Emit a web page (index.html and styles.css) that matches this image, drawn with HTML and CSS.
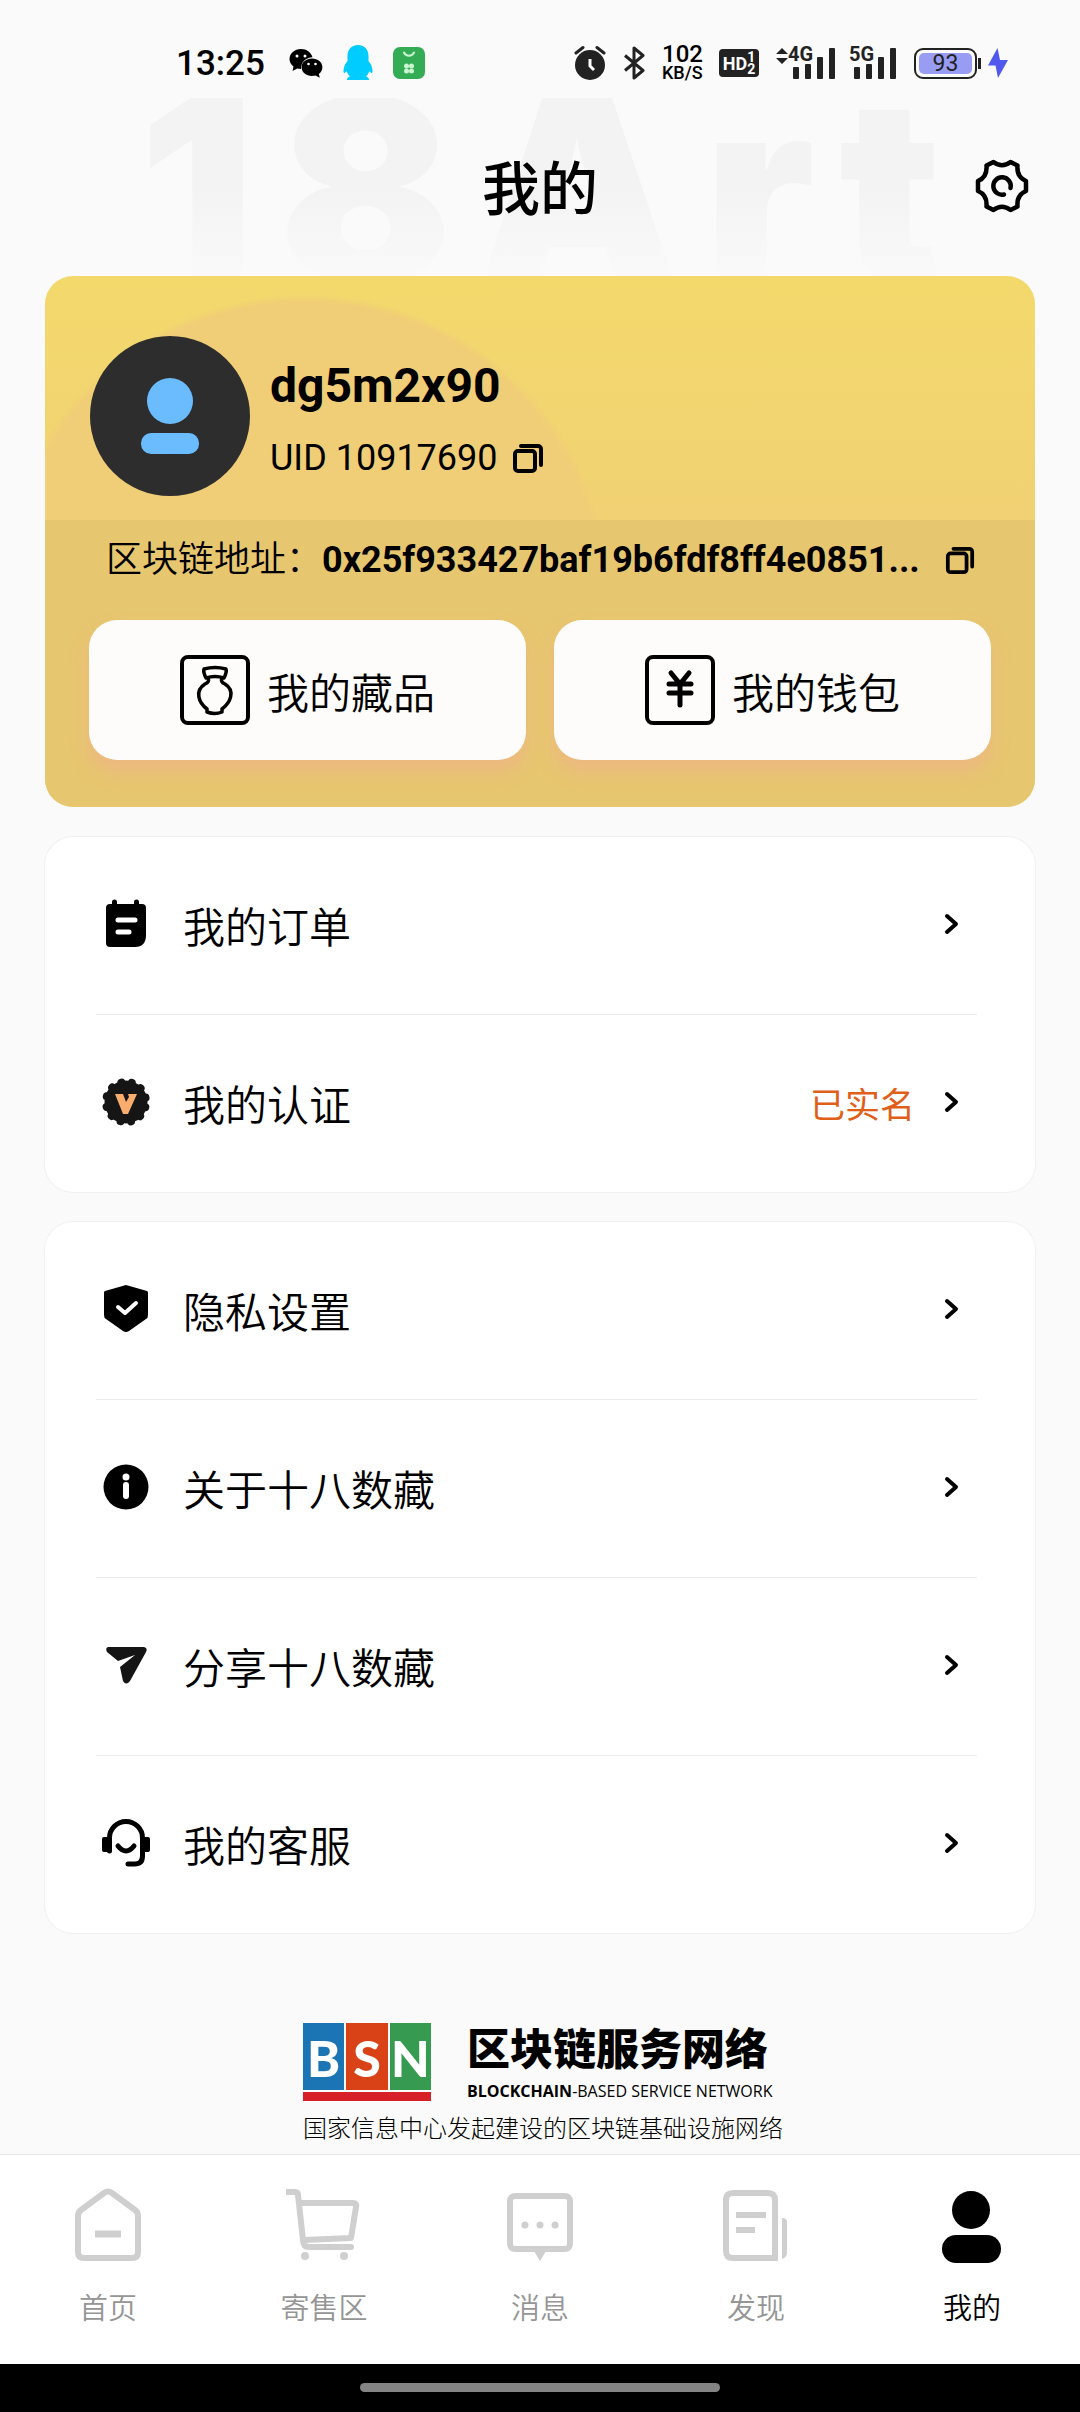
FILE: index.html
```html
<!DOCTYPE html>
<html lang="zh-CN">
<head>
<meta charset="utf-8">
<meta name="viewport" content="width=device-width, initial-scale=1">
<title>我的</title>
<link rel="stylesheet" href="styles.css">
</head>
<body>
<svg class="defs" aria-hidden="true">
  <symbol id="copy" viewBox="0 0 32 32"><path d="M9 4h17a3 3 0 0 1 3 3v16M3 12a3 3 0 0 1 3-3h14a3 3 0 0 1 3 3v14a3 3 0 0 1-3 3H6a3 3 0 0 1-3-3z" fill="none" stroke="currentColor" stroke-width="4" stroke-linecap="round"/></symbol>
  <symbol id="chevron" viewBox="0 0 16 24"><path d="M3 4l9 8-9 8" fill="none" stroke="currentColor" stroke-width="4" stroke-linecap="round" stroke-linejoin="round"/></symbol>
</svg>
<div class="page">
  <div class="watermark" aria-hidden="true"><span>1</span><span>8</span><span>A</span><span>r</span><span>t</span></div>

  <div class="status">
    <div class="status-left">
      <span class="clock">13:25</span>
      <svg width="34" height="30" viewBox="0 0 34 30"><path d="M12 1C5.500 1 .5 5.500.5 11c0 3 1.600 5.700 4 7.500L3.500 23l4.800-2.600c1.200.3 2.400.5 3.700.5C12 14 17 9.500 23.500 9.300 22.200 4.500 17.500 1 12 1z"/><path d="M23 10.500c-5.800 0-10.400 3.800-10.400 8.700S17.200 28 23 28c1.200 0 2.400-.2 3.500-.5l4.300 2.300-1-3.800c2.200-1.600 3.600-4 3.600-6.800 0-4.900-4.600-8.700-10.400-8.700z"/><g fill="#fff"><circle cx="8" cy="8" r="1.500"/><circle cx="16" cy="8" r="1.500"/><circle cx="19.500" cy="16" r="1.300"/><circle cx="26.500" cy="16" r="1.300"/></g></svg>
      <svg width="30" height="36" viewBox="0 0 30 36"><path fill="#0cf" d="M15 0C8 0 4.500 5 4.500 11v5C2 19 .5 22.500.5 26c0 2 .8 3 2.500.5l1 .2c.6 2 1.700 3.600 3 4.700-2 .6-3 1.500-3 3.600h22c0-2.100-1-3-3-3.600 1.300-1.100 2.400-2.700 3-4.700l1-.2c1.700 2.500 2.500 1.500 2.500-.5 0-3.500-1.500-7-4-10v-5C25.500 5 22 0 15 0z"/></svg>
      <svg width="32" height="32" viewBox="0 0 32 32"><rect width="32" height="32" rx="7" fill="#34ab55"/><path d="M11 5.500a5.500 5.500 0 0 0 10 0" fill="none" stroke="#c9f5d0" stroke-width="2" stroke-linecap="round"/><g fill="#c9f5d0"><circle cx="13.500" cy="19" r="2.500"/><circle cx="18.500" cy="19" r="2.500"/><circle cx="13.500" cy="24" r="2.500"/><circle cx="18.500" cy="24" r="2.500"/></g></svg>
    </div>
    <div class="status-right">
      <svg width="32" height="36" viewBox="0 0 32 36"><circle cx="16" cy="20" r="15" fill="#222"/><path d="M2 8l7-5.500M30 8l-7-5.500" stroke="#222" stroke-width="3" stroke-linecap="round"/><path d="M16 14v7l4 4" fill="none" stroke="#fff" stroke-width="3"/></svg>
      <svg width="22" height="34" viewBox="0 0 22 34"><path d="M2 9.500l18 15-9 7.500V2l9 7.500-18 15" fill="none" stroke="#222" stroke-width="3" stroke-linejoin="round"/></svg>
      <div class="speed"><span class="speed-num">102</span><span class="speed-unit">KB/S</span></div>
      <div class="hd"><span>HD</span><span class="hd-nums"><span>1</span><span>2</span></span></div>
      <div class="signal"><svg width="12" height="16" viewBox="0 0 12 16"><path d="M6 0l6 6H0zM6 16l6-6H0z" fill="#222"/></svg><div class="net"><span>4G</span><svg width="44" height="31" viewBox="0 0 44 31" fill="#222"><rect x="1" y="19" width="6" height="12" rx="1"/><rect x="13" y="16" width="6" height="15" rx="1"/><rect x="25" y="9" width="6" height="22" rx="1"/><rect x="37" width="6" height="31" rx="1"/></svg></div></div>
      <div class="net"><span>5G</span><svg width="44" height="31" viewBox="0 0 44 31" fill="#222"><rect x="1" y="19" width="6" height="12" rx="1"/><rect x="13" y="16" width="6" height="15" rx="1"/><rect x="25" y="9" width="6" height="22" rx="1"/><rect x="37" width="6" height="31" rx="1"/></svg></div>
      <div class="battery"><span>93</span></div>
      <svg class="bolt" width="20" height="30" viewBox="0 0 20 30"><path d="M9.500 0L0 17.500h7.500L10 30l10-18h-8z" fill="#5258ee"/></svg>
    </div>
  </div>

  <header class="header">
    <h1>我的</h1>
    <button class="gear" aria-label="设置"><svg width="54" height="54" viewBox="-27 -27 54 54"><path d="M-15.500-20.500L-8.500-24Q0-17.500 8.500-24L15.500-20.500Q14.500-9 24-5V5Q14.500 9 15.500 20.500L8.500 24Q0 17.500-8.500 24L-15.500 20.500Q-14.500 9-24 5V-5Q-14.500-9-15.500-20.500z" fill="none" stroke="#000" stroke-width="4.500" stroke-linejoin="round"/><path d="M8.500 2A8.700 8.700 0 1 0 2 8.500" fill="none" stroke="#000" stroke-width="4.500" stroke-linecap="round"/></svg></button>
  </header>

  <main>
    <section class="account">
      <div class="profile">
        <div class="avatar"><svg width="60" height="78" viewBox="0 0 60 78" fill="#6bbcff"><circle cx="30" cy="24" r="23"/><rect x="1" y="56" width="58" height="21" rx="10"/></svg></div>
        <div class="who">
          <h2>dg5m2x90</h2>
          <div class="uid"><span>UID 10917690</span><button aria-label="复制UID"><svg width="32" height="32"><use href="#copy"/></svg></button></div>
        </div>
      </div>
      <div class="chain">
        <div class="address">
          <div class="address-text">
            <span class="address-label">区块链地址：</span>
            <span class="address-value">0x25f933427baf19b6fdf8ff4e0851...</span>
          </div>
          <button aria-label="复制地址"><svg width="30" height="30"><use href="#copy"/></svg></button>
        </div>
        <div class="shortcuts">
          <button><svg width="70" height="70" viewBox="0 0 70 70" fill="none" stroke="#000"><rect x="2" y="2" width="66" height="66" rx="6" stroke-width="4"/><path d="M24 14Q35 11 46 14Q47 17 44 23Q35 20 26 23Q23 17 24 14zM28 23Q30 27 25 29C14 36 19 48 27 54V57Q35 60 42 57V54C50 48 56 36 45 29Q40 27 42 23" stroke-width="3.500" stroke-linejoin="round"/></svg><span>我的藏品</span></button>
          <button><svg width="70" height="70" viewBox="0 0 70 70" fill="none" stroke="#000"><rect x="2" y="2" width="66" height="66" rx="6" stroke-width="4"/><path d="M26 18l9 11 9-11M24 29h22M24 38h22M35 29v21" stroke-width="5" stroke-linecap="round"/></svg><span>我的钱包</span></button>
        </div>
      </div>
    </section>

    <nav class="menu">
      <a href="#orders"><svg class="lead" width="60" height="52" viewBox="0 0 60 52"><path d="M14 6h2V4a2 2 0 0 1 5 0v2h17V4a2 2 0 0 1 5 0v2h3a4 4 0 0 1 4 4v27q0 12-11 12H14a4 4 0 0 1-4-4V10a4 4 0 0 1 4-4z"/><path d="M22 22h17M22 34h11" stroke="#fff" stroke-width="5" stroke-linecap="round"/></svg><span class="label">我的订单</span><svg class="chev" width="16" height="24"><use href="#chevron"/></svg></a>
      <a href="#verify"><svg class="lead" width="60" height="52" viewBox="-30 -26 60 52"><circle r="21.500" fill="#151515"/><circle r="20" fill="none" stroke="#151515" stroke-width="8" stroke-linecap="round" stroke-dasharray="0.010 10.462" transform="rotate(15)"/><path d="M-11-8h8l3 8 3-5-1-3h9L2 12h-5z" fill="#f8ac6d"/></svg><span class="label">我的认证</span><span class="state">已实名</span><svg class="chev" width="16" height="24"><use href="#chevron"/></svg></a>
    </nav>

    <nav class="menu">
      <a href="#privacy"><svg class="lead" width="60" height="52" viewBox="0 0 60 52"><path d="M30 2l21 6a2 2 0 0 1 1 2v22q0 3-2 4L33 48q-3 2-6 0L10 36q-2-1-2-4V10a2 2 0 0 1 1-2z"/><path d="M22 24l7 6 11-10" fill="none" stroke="#fff" stroke-width="4" stroke-linecap="round" stroke-linejoin="round"/></svg><span class="label">隐私设置</span><svg class="chev" width="16" height="24"><use href="#chevron"/></svg></a>
      <a href="#about"><svg class="lead" width="60" height="52" viewBox="0 0 60 52"><circle cx="30" cy="26" r="22.500"/><circle cx="30" cy="16" r="3.500" fill="#fff"/><path d="M30 24v11" fill="none" stroke="#fff" stroke-width="6" stroke-linecap="round"/></svg><span class="label">关于十八数藏</span><svg class="chev" width="16" height="24"><use href="#chevron"/></svg></a>
      <a href="#share"><svg class="lead" width="60" height="52" viewBox="0 0 60 52"><path d="M12 8h36q4 1 2 5L34 42q-4 5-7 0l-3-14 15-12-17 6-11-9q-2-4 1-5z" fill="#151515"/></svg><span class="label">分享十八数藏</span><svg class="chev" width="16" height="24"><use href="#chevron"/></svg></a>
      <a href="#service"><svg class="lead" width="60" height="52" viewBox="0 0 60 52"><path d="M13.500 34V21a16.500 16.500 0 0 1 33 0v18q0 8-8 8H32" fill="none" stroke="#000" stroke-width="5" stroke-linecap="round"/><rect x="6" y="20" width="9" height="15" rx="2"/><rect x="45" y="20" width="9" height="15" rx="2"/><path d="M22 29q8 10 16 0" fill="none" stroke="#000" stroke-width="5" stroke-linecap="round"/></svg><span class="label">我的客服</span><svg class="chev" width="16" height="24"><use href="#chevron"/></svg></a>
    </nav>

    <footer class="partner">
      <div class="partner-top">
        <div class="bsn"><span class="blue">B</span><span class="red">S</span><span class="green">N</span></div>
        <div class="partner-name"><strong>区块链服务网络</strong><span><b>BLOCKCHAIN</b>-BASED SERVICE NETWORK</span></div>
      </div>
      <p>国家信息中心发起建设的区块链基础设施网络</p>
    </footer>
  </main>

  <nav class="tabs">
    <a href="#home"><svg width="76" height="76" viewBox="0 0 76 76" fill="none" stroke="#cfcfcf" stroke-width="6"><path d="M8 29q0-4 3-6L34 6q4-3 8 0L65 23q3 2 3 6v36q0 6-6 6H14q-6 0-6-6z"/><path d="M25 47h26" stroke-width="7"/></svg><span>首页</span></a>
    <a href="#market"><svg width="76" height="76" viewBox="0 0 76 76" fill="none" stroke="#cfcfcf" stroke-width="6" stroke-linecap="round" stroke-linejoin="round"><path d="M1 5h8q3 0 3 3l5 45q0 7 6 7h42M13 16h54q4 0 3 4l-5 31-47 2"/><g fill="#cfcfcf" stroke="none"><circle cx="19" cy="69" r="4"/><circle cx="58" cy="69" r="4"/></g></svg><span>寄售区</span></a>
    <a href="#message"><svg width="76" height="76" viewBox="0 0 76 76" fill="none" stroke="#cfcfcf" stroke-width="6"><rect x="8" y="9" width="60" height="53" rx="5"/><g fill="#cfcfcf" stroke="none"><circle cx="23" cy="38" r="3.500"/><circle cx="38" cy="38" r="3.500"/><circle cx="53" cy="38" r="3.500"/><path d="M32 64h12l-6 10z"/></g></svg><span>消息</span></a>
    <a href="#discover"><svg width="76" height="76" viewBox="0 0 76 76" fill="none" stroke="#cfcfcf" stroke-width="6"><path d="M57 71H15q-7 0-7-7V13q0-7 7-7h35q7 0 7 7z"/><path d="M18 28h30M18 43h19"/><path d="M64 31q5 0 5 4v31q0 4-5 6z" fill="#cfcfcf" stroke="none"/></svg><span>发现</span></a>
    <a href="#me" class="active" aria-current="page"><svg width="76" height="76" viewBox="0 0 76 76"><circle cx="37" cy="23" r="19"/><rect x="8" y="48" width="59" height="28" rx="14"/></svg><span>我的</span></a>
  </nav>
  <div class="gesture"><div class="pill"></div></div>
</div>
</body>
</html>
```

FILE: styles.css
```css
* { box-sizing: border-box; }
body {
  margin: 0;
  background: #fafafa;
  color: #000;
  font-family: Roboto, "Noto Sans CJK SC", sans-serif;
}
h1, h2, p { margin: 0; }
a { color: inherit; text-decoration: none; }
button {
  border: 0;
  padding: 0;
  background: none;
  color: inherit;
  font: inherit;
  cursor: pointer;
}
svg { display: block; flex: none; }
.defs { position: absolute; width: 0; height: 0; }

.page {
  position: relative;
  min-height: 100vh;
  display: flex;
  flex-direction: column;
}
.watermark {
  position: absolute;
  z-index: -1;
  top: 98px;
  left: 0;
  right: 0;
  display: flex;
  justify-content: center;
  gap: 24px;
  font: 900 256px/184px Inter, sans-serif;
  color: transparent;
  background: linear-gradient(#f3f3f3 50%, #fafafa);
  -webkit-background-clip: text;
  background-clip: text;
}

/* Status bar */
.status {
  height: 126px;
  padding: 0 72px 0 176px;
  display: flex;
  justify-content: space-between;
  align-items: center;
}
.status-left, .status-right { display: flex; align-items: center; }
.status-left { gap: 20px; }
.clock { font-size: 35px; font-weight: 500; margin-right: 4px; }
.status-right { gap: 17px; color: #222; }
.speed { width: 40px; color: #000; font-weight: 500; text-align: center; }
.speed span { display: block; }
.speed-num { font-size: 24px; line-height: 20px; }
.speed-unit { font-size: 18px; line-height: 18px; }
.hd {
  width: 40px;
  height: 28px;
  border-radius: 4px;
  background: #222;
  color: #fff;
  font-size: 18px;
  font-weight: 700;
  display: flex;
  justify-content: center;
  align-items: center;
}
.hd-nums { display: grid; font-size: 14px; line-height: 12px; }
.signal { display: flex; gap: 4px; align-items: flex-start; }
.net { position: relative; }
.net span {
  position: absolute;
  top: -4px;
  left: -4px;
  font-size: 20px;
  line-height: 20px;
  font-weight: 700;
}
.battery {
  position: relative;
  width: 63px;
  height: 31px;
  border: 2px solid #222;
  border-radius: 9px;
  padding: 3px;
}
.battery span {
  display: block;
  border-radius: 5px;
  background: #999cf3;
  color: #222;
  text-align: center;
  font-size: 23px;
  line-height: 21px;
}
.battery::after {
  content: "";
  position: absolute;
  right: -6px;
  top: 8px;
  width: 3px;
  height: 11px;
  background: #222;
}
.bolt { margin-left: -6px; }

/* Title bar */
.header {
  height: 120px;
  margin-bottom: 30px;
  padding: 0 51px;
  display: grid;
  grid-template-columns: 1fr auto 1fr;
  align-items: center;
}
.header h1 { grid-column: 2; padding-top: 8px; font-size: 58px; line-height: 84px; font-weight: 500; }
.gear { justify-self: end; }

main {
  flex: 1;
  padding: 0 45px;
  display: flex;
  flex-direction: column;
  gap: 30px;
}

/* Account card */
.account {
  border-radius: 28px;
  overflow: hidden;
  background: radial-gradient(circle 304px at 260px 322px, #f0cd77 97%, transparent), linear-gradient(#f3d96c, #f1d173 244px);
}
.profile {
  padding: 60px 45px 24px;
  display: flex;
  gap: 20px;
}
.avatar {
  width: 160px;
  height: 160px;
  border-radius: 50%;
  background: #2d2d2d;
  display: flex;
  justify-content: center;
  align-items: center;
}
.who { padding-top: 20px; }
.who h2 { font-size: 48px; line-height: 60px; font-weight: 700; }
.uid { display: flex; align-items: center; gap: 14px; margin-top: 12px; font-size: 36px; line-height: 60px; }
.chain { padding: 0 44px 47px; background: #e7c670; }
.address {
  height: 100px;
  padding: 0 16px 20px 17px;
  display: flex;
  align-items: center;
}
.address-text {
  flex: 1;
  min-width: 0;
  display: flex;
  align-items: baseline;
  font-size: 36px;
  line-height: 60px;
}
.address-label { font-weight: 350; flex: none; }
.address-value { font-weight: 700; flex: 1; min-width: 0; overflow: hidden; white-space: nowrap; text-overflow: ellipsis; }
.shortcuts { display: grid; grid-template-columns: 1fr 1fr; gap: 28px; }
.shortcuts button {
  height: 140px;
  border-radius: 28px;
  background: #fdfcfa;
  box-shadow: 0 12px 16px #f0b08a99;
  display: flex;
  justify-content: center;
  align-items: center;
  gap: 17px;
  font-size: 42px;
  font-weight: 350;
}

/* Menu cards */
.menu {
  padding: 0 58px 0 51px;
  border-radius: 28px;
  background: #fff;
  box-shadow: 0 0 0 1px #f1f1f1;
}
.menu a {
  height: 177px;
  padding: 0 17px 3px 0;
  display: flex;
  align-items: center;
  font-size: 42px;
  font-weight: 350;
}
.menu a + a { height: 178px; border-top: 1px solid #ececec; }
.lead { margin-right: 27px; }
.label { flex: 1; }
.state { margin-right: 29px; color: #e0601a; font-size: 35px; font-weight: 400; }

/* Partner mark */
.partner {
  margin: 60px auto 0;
  width: 474px;
}
.partner-top { height: 78px; display: flex; gap: 36px; }
.bsn {
  flex: none;
  width: 128px;
  height: 78px;
  border-bottom: 9px solid #d71f27;
  padding-bottom: 2px;
  display: grid;
  grid-template-columns: 1fr 1fr 1fr;
  gap: 2px;
  font: 900 50px/70px Lato, sans-serif;
  color: #fff;
  text-align: center;
}
.bsn span { height: 67px; }
.blue { background: #1b75b4; }
.red { background: #d94217; }
.green { background: #379a51; }
.partner-name { display: flex; flex-direction: column; white-space: nowrap; }
.partner-name strong { font-size: 43px; line-height: 54px; font-weight: 900; }
.partner-name span { font: 16px/28px "Open Sans", sans-serif; }
.partner p { margin-top: 10px; font-size: 24px; line-height: 36px; font-weight: 300; white-space: nowrap; }

/* Tab bar */
.tabs {
  margin-top: 7px;
  height: 210px;
  border-top: 1px solid #e6e6e6;
  background: #fff;
  display: grid;
  grid-template-columns: repeat(5, 1fr);
}
.tabs a {
  padding-top: 32px;
  display: flex;
  flex-direction: column;
  align-items: center;
  gap: 24px;
  color: #959595;
  font-size: 29px;
  line-height: 44px;
  font-weight: 350;
}
.tabs .active { color: #000; }

.gesture {
  height: 48px;
  padding-bottom: 2px;
  background: #000;
  display: flex;
  justify-content: center;
  align-items: center;
}
.pill { width: 33.333%; height: 9px; border-radius: 5px; background: #848484; }
```
